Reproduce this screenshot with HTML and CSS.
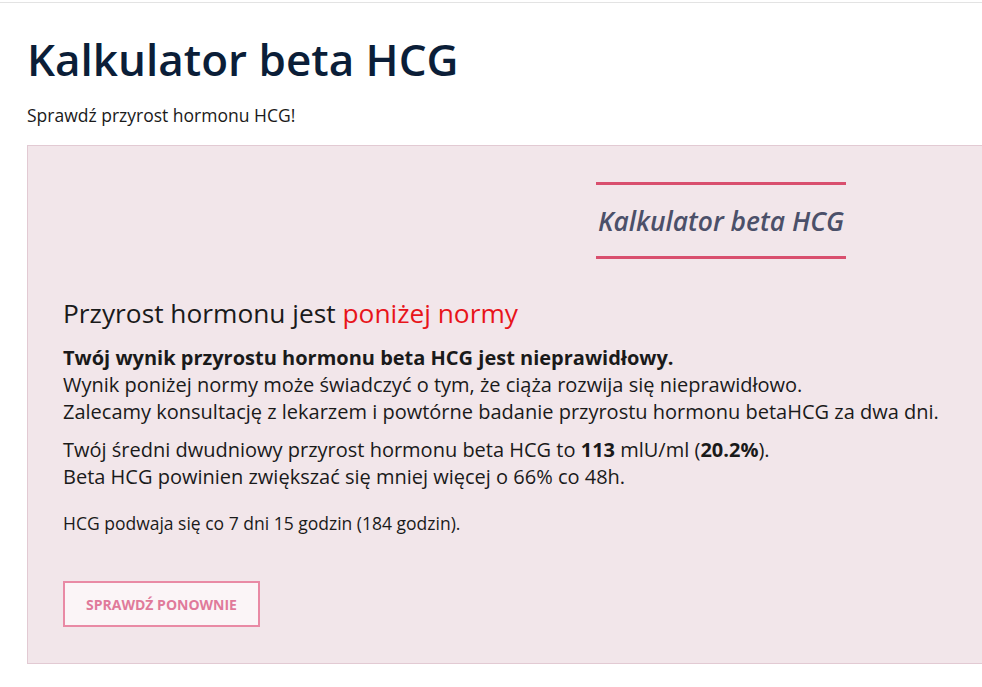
FILE: index.html
```html
<!DOCTYPE html>
<html lang="pl">
<head>
    <meta charset="UTF-8">
    <meta name="viewport" content="width=device-width, initial-scale=1.0">
    <title>Kalkulator beta HCG</title>
    <link rel="stylesheet" href="styles.css">
</head>
<body>
    <div class="topbar"></div>
    <div class="page">
        <h1 class="page-title">Kalkulator beta HCG</h1>
        <p class="lead">Sprawdź przyrost hormonu HCG!</p>

        <div class="calc-box">
            <div class="calc-banner">
                <span>Kalkulator beta HCG</span>
            </div>

            <div class="result">
                <h2 class="result-title">Przyrost hormonu jest <span class="bad">poniżej normy</span></h2>
                <p class="result-text">
                    <strong>Twój wynik przyrostu hormonu beta HCG jest nieprawidłowy.</strong><br>
                    Wynik poniżej normy może świadczyć o tym, że ciąża rozwija się nieprawidłowo.<br>
                    Zalecamy konsultację z lekarzem i powtórne badanie przyrostu hormonu betaHCG za dwa dni.
                </p>
                <p class="result-text">
                    Twój średni dwudniowy przyrost hormonu beta HCG to <strong>113</strong> mlU/ml (<strong>20.2%</strong>).<br>
                    Beta HCG powinien zwiększać się mniej więcej o 66% co 48h.
                </p>
                <p class="result-note">HCG podwaja się co 7 dni 15 godzin (184 godzin).</p>
                <button class="btn-again">Sprawdź ponownie</button>
            </div>
        </div>
    </div>
</body>
</html>
```

FILE: styles.css
```css
html, body {
    margin: 0;
    padding: 0;
}
body {
    font-family: "Open Sans", "Liberation Sans", sans-serif;
    color: #1a1a1a;
    background: #fff;
}
.topbar {
    height: 2px;
    border-bottom: 1px solid #e3e3e3;
}
.page {
    padding-left: 27px;
}
.page-title {
    margin: 28px 0 0;
    font-size: 44px;
    font-weight: 600;
    line-height: 1.3;
    color: #0b1e38;
}
.lead {
    margin: 14px 0 0;
    font-size: 17.5px;
    line-height: 1.5;
    color: #1a1a1a;
}
/* box runs off the right side, so no right border */
.calc-box {
    margin-top: 17px;
    padding: 36px 0 36px 35px;
    background: #f2e6ea;
    border: 1px solid #e2cad3;
    border-right: 0;
}
.calc-banner {
    width: 250px;
    margin-left: 533px;
    padding: 18px 0 17px;
    border-top: 3px solid #d94f6e;
    border-bottom: 3px solid #d94f6e;
    text-align: center;
}
.calc-banner span {
    font-size: 26.4px;
    font-style: italic;
    font-weight: 600;
    color: #4b5069;
}
.result {
    margin-top: 36px;
}
.result-title {
    margin: 0 0 12px;
    font-size: 26.3px;
    font-weight: 400;
    line-height: 36.4px;
    color: #1a1a1a;
}
.result-title .bad {
    color: #e8141a;
}
.result-text {
    margin: 0 0 11px;
    font-size: 20px;
    line-height: 27px;
    color: #1a1a1a;
}
.result-text strong {
    font-weight: 700;
}
.result-note {
    margin: 21px 0 0;
    font-size: 17.5px;
    line-height: 25.5px;
    color: #1a1a1a;
}
.btn-again {
    display: block;
    margin-top: 45px;
    width: 197px;
    height: 46px;
    background: #fbf5f7;
    border: 2px solid #e98aa5;
    color: #e07a9a;
    font-family: "Open Sans", "Liberation Sans", sans-serif;
    font-size: 14px;
    font-weight: 700;
    text-transform: uppercase;
    cursor: pointer;
}
```
